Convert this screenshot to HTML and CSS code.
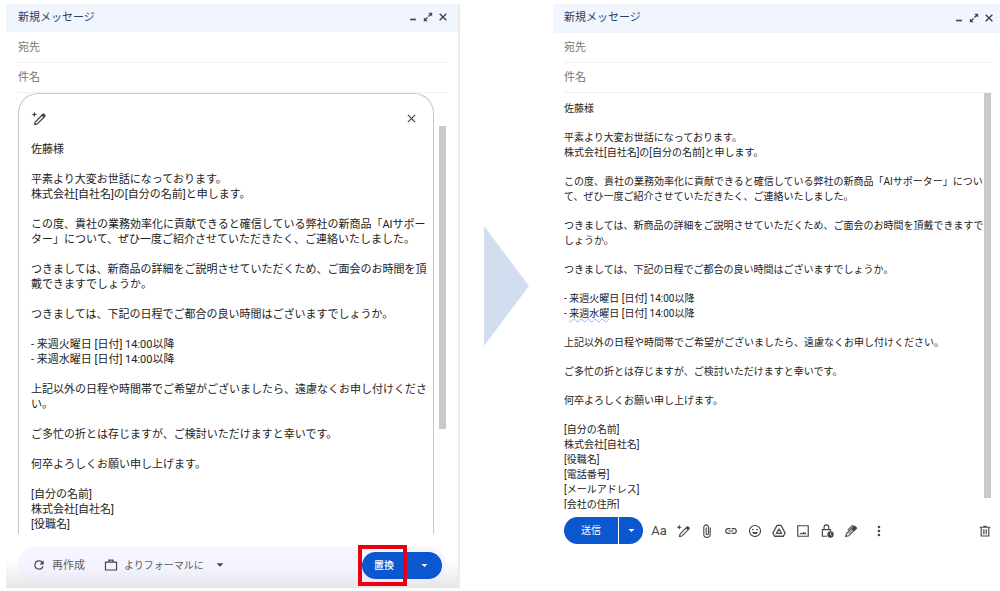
FILE: index.html
```html
<!DOCTYPE html>
<html lang="ja">
<head>
    <meta charset="UTF-8">
    <meta name="viewport" content="width=device-width, initial-scale=1.0">
    <title>新規メッセージ</title>
    <link rel="stylesheet" href="styles.css">
</head>
<body>
    <svg width="0" height="0" class="sprite" aria-hidden="true">
        <symbol id="i-min" viewBox="0 0 24 24"><path d="M5 16h14v4H5z"/></symbol>
        <symbol id="i-expand" viewBox="0 0 24 24"><path d="M13 2h9v9l-3.300-3.300-4.500 4.500-2.400-2.400 4.500-4.500zM11 22H2v-9l3.300 3.300 4.500-4.500 2.400 2.400-4.500 4.500z"/></symbol>
        <symbol id="i-close" viewBox="0 0 24 24"><path d="M4 4l16 16M20 4L4 20" fill="none" stroke="currentColor" stroke-width="3.500"/></symbol>
        <symbol id="i-close-thin" viewBox="0 0 24 24"><path d="M4 4l16 16M20 4L4 20" fill="none" stroke="currentColor" stroke-width="2.600"/></symbol>
        <symbol id="i-magic" viewBox="0 0 24 24">
            <path d="M5.500 1l1.300 3.200L10 5.500 6.800 6.800 5.500 10 4.200 6.800 1 5.500l3.200-1.300z"/>
            <path d="M6 21.500l.8-4L18 6.300l3.200 3.200L10 20.700z" fill="none" stroke="currentColor" stroke-width="2"/>
            <path d="M16.500 6.500l2.300-2.300a1.600 1.600 0 0 1 2.300 0l2 2a1.600 1.600 0 0 1 0 2.300l-2.300 2.300z"/>
        </symbol>
        <symbol id="i-refresh" viewBox="0 0 24 24"><path d="M17.650 6.350A7.960 7.960 0 0 0 12 4a8 8 0 1 0 7.730 10h-2.080A6 6 0 1 1 12 6c1.660 0 3.140.69 4.220 1.780L13 11h7V4z"/></symbol>
        <symbol id="i-work" viewBox="0 0 24 24"><path d="M2.500 7h19v13.500h-19zM8.500 7V3.500h7V7" fill="none" stroke="currentColor" stroke-width="2"/></symbol>
        <symbol id="i-caret" viewBox="0 0 24 24"><path d="M4 8h16l-8 8z"/></symbol>
        <symbol id="i-clip" viewBox="0 0 24 24"><path d="M17.500 6v11.500a5.500 5.500 0 0 1-11 0V5.500a4 4 0 0 1 8 0v11a2 2 0 0 1-4 0V6" fill="none" stroke="currentColor" stroke-width="1.900"/></symbol>
        <symbol id="i-link" viewBox="0 0 24 24"><path d="M3.900 12A3.100 3.100 0 0 1 7 8.900h4V7H7a5 5 0 0 0 0 10h4v-1.900H7A3.100 3.100 0 0 1 3.900 12zM8 13h8v-2H8zm9-6h-4v1.900h4a3.100 3.100 0 0 1 0 6.200h-4V17h4a5 5 0 0 0 0-10z"/></symbol>
        <symbol id="i-emoji" viewBox="0 0 24 24"><circle cx="12" cy="12" r="9.500" fill="none" stroke="currentColor" stroke-width="2"/><circle cx="8.500" cy="9.500" r="1.500"/><circle cx="15.500" cy="9.500" r="1.500"/><path d="M7 13.500h10a5.200 5.200 0 0 1-10 0z"/></symbol>
        <symbol id="i-drive" viewBox="0 0 24 24"><path d="M8.500 2.500h7L22.500 15.500 19.500 21h-15L1.500 15.500zM12 8.500L7.500 16h9z" fill="none" stroke="currentColor" stroke-width="2.200" stroke-linejoin="round"/></symbol>
        <symbol id="i-image" viewBox="0 0 24 24"><path d="M3 3h18v18H3z" fill="none" stroke="currentColor" stroke-width="2"/><path d="M6 17.500l2.500-3 2 1.800 2.500-3 1.700 2.200 1.500-1.500 1.800 3.500z"/></symbol>
        <symbol id="i-lock" viewBox="0 0 24 24"><path d="M12 21H4V9.500h14V12M7 9.500V5.500a4 4 0 0 1 8 0v4" fill="none" stroke="currentColor" stroke-width="2"/><circle cx="18" cy="18" r="5.500"/><path d="M18 15v3.300l2 1.200" fill="none" stroke="#fff" stroke-width="1.300"/></symbol>
        <symbol id="i-sign" viewBox="0 0 24 24">
            <path d="M3 21.500l1.200-5L17 3.800l3.800 3.800L8 20.300z" fill="none" stroke="currentColor" stroke-width="2"/>
            <path d="M12.500 8.500l5-5a1.500 1.500 0 0 1 2 0l2.500 2.500a1.500 1.500 0 0 1 0 2l-5 5z"/>
            <path d="M6.500 10.500L14.500 2.500l2 2" fill="none" stroke="currentColor" stroke-width="2"/>
            <path d="M8 16.500l6-6" stroke="currentColor" stroke-width="1.500"/>
        </symbol>
        <symbol id="i-more" viewBox="0 0 24 24"><circle cx="12" cy="5" r="2.200"/><circle cx="12" cy="12" r="2.200"/><circle cx="12" cy="19" r="2.200"/></symbol>
        <symbol id="i-trash" viewBox="0 0 24 24"><path d="M5.500 6v14.500h13V6M3 5.500h18M9 4h6M10 9v8.500M14 9v8.500" fill="none" stroke="currentColor" stroke-width="2"/></symbol>
    </svg>

    <main class="board">
        <section class="window draft">
            <header class="titlebar">
                <h2>新規メッセージ</h2>
                <div class="controls">
                    <button aria-label="最小化"><svg><use href="#i-min"/></svg></button>
                    <button aria-label="全画面表示"><svg><use href="#i-expand"/></svg></button>
                    <button aria-label="閉じる"><svg><use href="#i-close"/></svg></button>
                </div>
            </header>
            <div class="field"><label for="to1">宛先</label><input id="to1" type="text"></div>
            <div class="field"><label for="subject1">件名</label><input id="subject1" type="text"></div>

            <div class="draft-area">
                <article class="card">
                    <div class="card-head">
                        <svg class="icon"><use href="#i-magic"/></svg>
                        <button aria-label="下書きを閉じる"><svg><use href="#i-close-thin"/></svg></button>
                    </div>
                    <div class="letter">
                        <p>佐藤様</p>
                        <p>平素より大変お世話になっております。<br>株式会社[自社名]の[自分の名前]と申します。</p>
                        <p>この度、貴社の業務効率化に貢献できると確信している弊社の新商品「AIサポー<br>ター」について、ぜひ一度ご紹介させていただきたく、ご連絡いたしました。</p>
                        <p>つきましては、新商品の詳細をご説明させていただくため、ご面会のお時間を頂<br>戴できますでしょうか。</p>
                        <p>つきましては、下記の日程でご都合の良い時間はございますでしょうか。</p>
                        <p>- 来週火曜日 [日付] 14:00以降<br>- 来週水曜日 [日付] 14:00以降</p>
                        <p>上記以外の日程や時間帯でご希望がございましたら、遠慮なくお申し付けくださ<br>い。</p>
                        <p>ご多忙の折とは存じますが、ご検討いただけますと幸いです。</p>
                        <p>何卒よろしくお願い申し上げます。</p>
                        <p>[自分の名前]<br>株式会社[自社名]<br>[役職名]</p>
                    </div>
                </article>
                <div class="scrollbar"></div>
            </div>

            <footer class="draft-footer">
                <div class="actions">
                    <button class="text-btn"><svg><use href="#i-refresh"/></svg>再作成</button>
                    <button class="text-btn tone"><svg><use href="#i-work"/></svg>よりフォーマルに<svg class="caret"><use href="#i-caret"/></svg></button>
                    <div class="split">
                        <button class="main">置換</button>
                        <button class="drop" aria-label="その他の挿入方法"><svg><use href="#i-caret"/></svg></button>
                        <span class="highlight"></span>
                    </div>
                </div>
            </footer>
        </section>

        <div class="arrow"></div>

        <section class="window result">
            <header class="titlebar">
                <h2>新規メッセージ</h2>
                <div class="controls">
                    <button aria-label="最小化"><svg><use href="#i-min"/></svg></button>
                    <button aria-label="全画面表示"><svg><use href="#i-expand"/></svg></button>
                    <button aria-label="閉じる"><svg><use href="#i-close"/></svg></button>
                </div>
            </header>
            <div class="field"><label for="to2">宛先</label><input id="to2" type="text"></div>
            <div class="field"><label for="subject2">件名</label><input id="subject2" type="text"></div>

            <div class="editor">
                <div class="letter">
                    <p>佐藤様</p>
                    <p>平素より大変お世話になっております。<br>株式会社[自社名]の[自分の名前]と申します。</p>
                    <p>この度、貴社の業務効率化に貢献できると確信している弊社の新商品「AIサポーター」につい<br>て、ぜひ一度ご紹介させていただきたく、ご連絡いたしました。</p>
                    <p>つきましては、新商品の詳細をご説明させていただくため、ご面会のお時間を頂戴できますで<br>しょうか。</p>
                    <p>つきましては、下記の日程でご都合の良い時間はございますでしょうか。</p>
                    <p>- 来週火曜日 [日付] 14:00以降<br>- <span class="suggest">来週水曜</span>日 [日付] 14:00以降</p>
                    <p>上記以外の日程や時間帯でご希望がございましたら、遠慮なくお申し付けください。</p>
                    <p>ご多忙の折とは存じますが、ご検討いただけますと幸いです。</p>
                    <p>何卒よろしくお願い申し上げます。</p>
                    <p>[自分の名前]<br>株式会社[自社名]<br>[役職名]<br>[電話番号]<br>[メールアドレス]<br>[会社の住所]</p>
                </div>
                <div class="scrollbar"></div>
            </div>

            <footer class="toolbar">
                <div class="split">
                    <button class="main">送信</button>
                    <button class="drop" aria-label="その他の送信オプション"><svg><use href="#i-caret"/></svg></button>
                </div>
                <div class="tools">
                    <button class="format" aria-label="書式設定オプション">Aa</button>
                    <button aria-label="文書作成サポート"><svg><use href="#i-magic"/></svg></button>
                    <button aria-label="ファイルを添付"><svg><use href="#i-clip"/></svg></button>
                    <button aria-label="リンクを挿入"><svg><use href="#i-link"/></svg></button>
                    <button aria-label="絵文字を挿入"><svg><use href="#i-emoji"/></svg></button>
                    <button aria-label="ドライブを使用してファイルを挿入"><svg><use href="#i-drive"/></svg></button>
                    <button aria-label="写真を挿入"><svg><use href="#i-image"/></svg></button>
                    <button aria-label="情報保護モード"><svg><use href="#i-lock"/></svg></button>
                    <button aria-label="署名を挿入"><svg><use href="#i-sign"/></svg></button>
                    <button class="more" aria-label="その他のオプション"><svg><use href="#i-more"/></svg></button>
                </div>
                <button class="trash" aria-label="下書きを破棄"><svg><use href="#i-trash"/></svg></button>
            </footer>
        </section>
    </main>
</body>
</html>
```
FILE: styles.css
```css
:root {
    --text: #222;
    --muted: #757575;
    --icon: #444746;
    --title: #263e6b;
    --bar: #f1f5fe;
    --line: #f1f1f1;
    --blue: #0b57d0;
    --thumb: #c9c9c9;
    --red: #e60012;
}

* {
    box-sizing: border-box;
}

body {
    margin: 0;
    background: #fff;
    color: var(--text);
    font-family: Roboto, "Noto Sans CJK JP", sans-serif;
    font-size: 11px;
    line-height: 15px;
}

button {
    display: flex;
    align-items: center;
    justify-content: center;
    padding: 0;
    border: none;
    background: none;
    color: var(--icon);
    font: inherit;
    cursor: pointer;
}

svg {
    display: block;
    fill: currentColor;
}

.sprite {
    position: absolute;
}

.board {
    display: grid;
    grid-template-columns: 454fr 93fr 447fr;
    padding: 4px 0 3px 6px;
}

.window {
    min-width: 0;
}

/* Title bar */
.titlebar {
    display: flex;
    align-items: center;
    justify-content: space-between;
    height: 28px;
    padding: 0 10px 2px 12px;
    background: var(--bar);
}

.titlebar h2 {
    margin: 0;
    color: var(--title);
    font-size: 11px;
    font-weight: 400;
}

.controls {
    display: flex;
    gap: 5px;
}

.controls svg {
    width: 10px;
    height: 10px;
}

.field {
    display: flex;
    align-items: center;
    height: 30px;
    border-bottom: 1px solid var(--line);
    color: var(--muted);
}

.field input {
    flex: 1;
    min-width: 0;
    border: none;
    outline: none;
    background: none;
    font: inherit;
}

.letter p {
    margin: 0 0 15px;
    white-space: nowrap;
}

.letter p:last-child {
    margin-bottom: 0;
}

.scrollbar {
    flex: none;
    width: 7px;
    background: var(--thumb);
}

/* Draft window */
.draft {
    border-right: 2px solid #ececec;
}

.draft .titlebar {
    margin-bottom: 1px;
}

.draft .field {
    margin: 0 11px 0 12px;
}

.draft-area {
    display: flex;
    gap: 5px;
    padding: 0 12px;
}

.card {
    flex: 1;
    min-width: 0;
    padding: 0 12px 2px;
    border: 1px solid #c8c8c8;
    border-bottom: none;
    border-radius: 20px 20px 0 0;
}

.card-head {
    display: flex;
    align-items: center;
    justify-content: space-between;
    height: 48px;
    padding-right: 4px;
}

.card-head .icon {
    width: 15px;
    height: 15px;
    color: var(--icon);
}

.card-head button svg {
    width: 11px;
    height: 11px;
}

.draft-area .scrollbar {
    height: 303px;
    margin-top: 33px;
}

.draft-footer {
    margin-top: 13px;
    padding: 0 12px 5px;
    background: linear-gradient(#fff 30%, #e6e6e6);
}

.actions {
    display: flex;
    align-items: center;
    height: 36px;
    padding: 0 4px 0 14px;
    border-radius: 18px;
    background: linear-gradient(#f4f5fe 50%, #e9eaf5);
}

.text-btn {
    color: #5a5d5c;
}

.text-btn svg {
    width: 14px;
    height: 14px;
    margin-right: 6px;
    color: var(--icon);
}

.tone {
    margin-left: 19px;
    font-size: 10px;
}

.tone .caret {
    width: 10px;
    height: 10px;
    margin: 0 0 0 11px;
}

/* Split button */
.split {
    position: relative;
    display: flex;
    gap: 1px;
    height: 27px;
    font-size: 10px;
}

.split button {
    background: var(--blue);
    color: #fff;
}

.split .main {
    width: 54px;
    border-radius: 14px 0 0 14px;
}

.split .drop {
    width: 24px;
    border-radius: 0 14px 14px 0;
}

.split svg {
    width: 9px;
    height: 9px;
}

.actions .split {
    margin-left: auto;
}

.actions .main {
    width: 44px;
    font-weight: 500;
}

.actions .drop {
    width: 35px;
}

.highlight {
    position: absolute;
    top: -7px;
    left: -4px;
    width: 49px;
    height: 41px;
    border: 4px solid var(--red);
    pointer-events: none;
}

.arrow {
    align-self: center;
    justify-self: center;
    width: 45px;
    height: 120px;
    margin-bottom: 20px;
    background: #d2ddf0;
    clip-path: polygon(0 0, 100% 50%, 0 100%);
}

/* Message window */
.result .titlebar {
    height: 29px;
    padding: 0 6px 2px 11px;
}

.result .field {
    margin: 0 8px 0 11px;
}

.editor {
    display: flex;
    justify-content: space-between;
    height: 416px;
    margin: 0 9px 0 11px;
    overflow: hidden;
    font-size: 10px;
}

.editor .letter {
    min-width: 0;
    padding-top: 8px;
}

.editor p {
    margin-bottom: 14px;
}

.editor .scrollbar {
    height: 405px;
}

.suggest {
    text-decoration: underline wavy #8ab4f8 1px;
}

.toolbar {
    display: flex;
    align-items: center;
    margin-top: 8px;
    padding: 0 8px 0 11px;
}

.tools {
    display: flex;
    align-items: center;
    gap: 8px;
    margin-left: 8px;
}

.toolbar .split svg {
    width: 9px;
    height: 9px;
}

.toolbar .tools svg,
.toolbar .trash svg {
    width: 14px;
    height: 14px;
}

.tools button {
    width: 16px;
    height: 16px;
}

.tools .format {
    font-size: 13px;
}

.tools .more {
    margin-left: 4px;
}

.trash {
    margin-left: auto;
}
```
